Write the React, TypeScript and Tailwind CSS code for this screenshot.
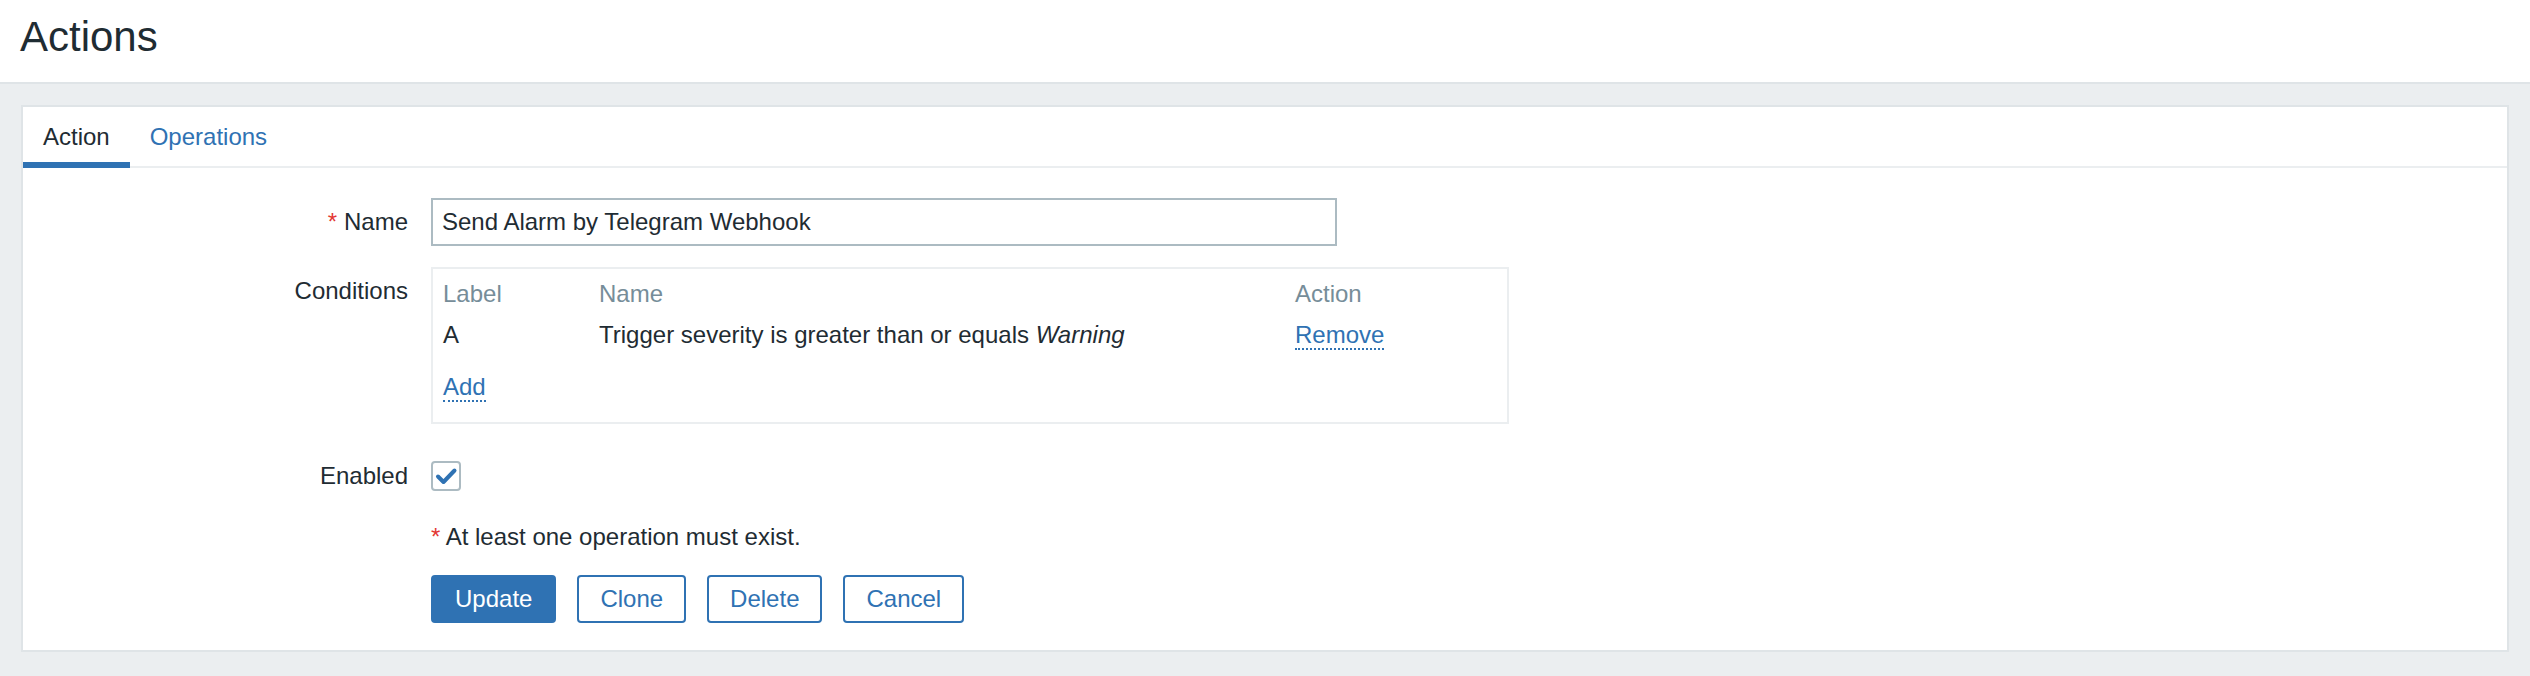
import React from "react";

function Checkbox() {
  return (
    <div className="w-[30px] h-[30px] rounded-[4px] border-2 border-[#acbbc2] bg-white flex items-center justify-center">
      <svg width="26" height="26" viewBox="0 0 26 26" fill="none">
        <polyline
          points="5,13.5 10.5,19 21.5,7.5"
          stroke="#2f72b3"
          strokeWidth="4"
          strokeLinecap="round"
          strokeLinejoin="round"
        />
      </svg>
    </div>
  );
}

export default function App() {
  return (
    <div className="w-[2530px] h-[676px] overflow-hidden bg-[#ebeef0] font-['Liberation_Sans',Arial,sans-serif] text-[#1f2c33] text-[24px] leading-[24px]">
      <header className="h-[84px] bg-white border-b-2 border-[#dfe4e7] pl-[20px] pt-[16px]">
        <h1 className="text-[42px] leading-[42px] font-normal">Actions</h1>
      </header>

      <div className="px-[21px] pt-[21px]">
        <div className="bg-white border-2 border-[#dfe4e7] pb-[27px]">
          <nav className="flex border-b-2 border-[#ebeef0]">
            <div className="px-[20px] pt-[18px] pb-[13px] border-b-[6px] border-[#2f72b3] -mb-[2px]">
              Action
            </div>
            <div className="px-[20px] pt-[18px] pb-[13px] border-b-[6px] border-transparent -mb-[2px] text-[#2f72b3]">
              Operations
            </div>
          </nav>

          <div className="mt-[30px]">
            {/* Name */}
            <div className="flex items-center gap-[23px]">
              <div className="w-[385px] text-right">
                <span className="text-[#e33734] mr-[7px]">*</span>
                Name
              </div>
              <input
                readOnly
                defaultValue="Send Alarm by Telegram Webhook"
                className="w-[906px] h-[48px] border-2 border-[#acbbc2] px-[9px] text-[24px] text-[#1f2c33] outline-none bg-white"
              />
            </div>

            {/* Conditions */}
            <div className="flex items-start gap-[23px] mt-[21px]">
              <div className="w-[385px] text-right pt-[12px]">Conditions</div>
              <div className="w-[1078px] border-2 border-[#ebeef0] px-[10px] pt-[13px] pb-[23px]">
                <div className="grid grid-cols-[156px_696px_1fr] text-[#768d99]">
                  <div>Label</div>
                  <div>Name</div>
                  <div>Action</div>
                </div>
                <div className="grid grid-cols-[156px_696px_1fr] mt-[17px]">
                  <div>A</div>
                  <div>
                    Trigger severity is greater than or equals <i>Warning</i>
                  </div>
                  <div>
                    <span className="text-[#2f72b3] border-b-2 border-dotted border-[#2f72b3]">
                      Remove
                    </span>
                  </div>
                </div>
                <div className="mt-[28px]">
                  <span className="text-[#2f72b3] border-b-2 border-dotted border-[#2f72b3]">
                    Add
                  </span>
                </div>
              </div>
            </div>

            {/* Enabled */}
            <div className="flex items-center gap-[23px] mt-[37px]">
              <div className="w-[385px] text-right">Enabled</div>
              <Checkbox />
            </div>

            {/* Note */}
            <div className="pl-[408px] mt-[34px]">
              <span className="text-[#e33734]">*</span> At least one operation must exist.
            </div>

            {/* Buttons */}
            <div className="pl-[408px] mt-[26px] flex gap-[21px]">
              <button className="h-[48px] px-[22px] rounded-[4px] border-2 border-[#2f72b3] bg-[#2f72b3] text-white flex items-center">
                Update
              </button>
              <button className="h-[48px] px-[21px] rounded-[4px] border-2 border-[#2f72b3] bg-white text-[#2f72b3] flex items-center">
                Clone
              </button>
              <button className="h-[48px] px-[21px] rounded-[4px] border-2 border-[#2f72b3] bg-white text-[#2f72b3] flex items-center">
                Delete
              </button>
              <button className="h-[48px] px-[21px] rounded-[4px] border-2 border-[#2f72b3] bg-white text-[#2f72b3] flex items-center">
                Cancel
              </button>
            </div>
          </div>
        </div>
      </div>
    </div>
  );
}
